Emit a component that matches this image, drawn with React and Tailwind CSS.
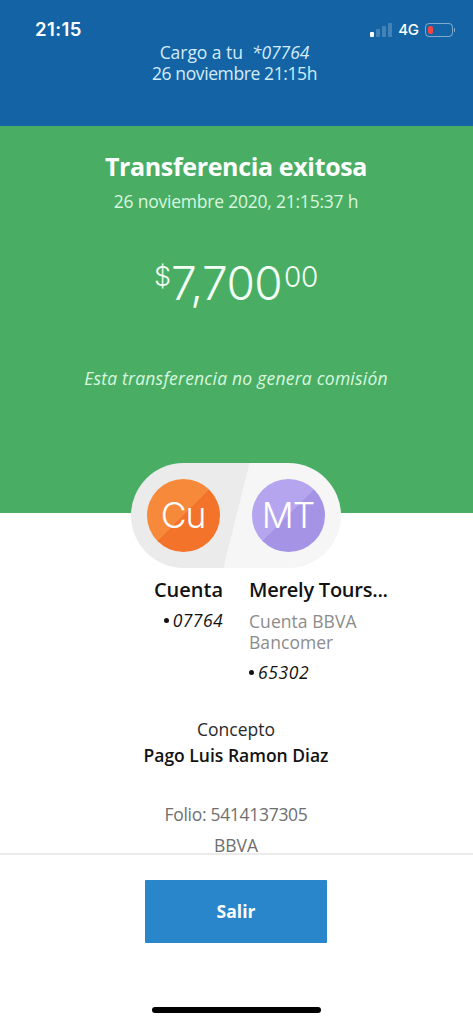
import React from 'react';

const STATUS_BARS = ['h-[5px] bg-white', 'h-2 bg-white/20', 'h-[11px] bg-white/20', 'h-[14px] bg-white/20'];

const StatusBar = () => (
  <div className="h-10 shrink-0 pt-[18px] pl-[35px] pr-[18px] flex items-start justify-between text-white">
    <span className="font-['Inter'] font-semibold text-[18.5px] leading-[23px] tracking-[0.4px]">21:15</span>
    <div className="flex items-center h-[23px]">
      <div className="flex items-end gap-[2px] mr-[6px]">
        {STATUS_BARS.map((bar) => (
          <span key={bar} className={`w-1 rounded-[1px] ${bar}`} />
        ))}
      </div>
      <span className="font-['Inter'] font-medium text-[15px] leading-[23px] tracking-[-0.4px] mr-[6px]">4G</span>
      <div className="w-7 h-[14px] rounded-[4px] border border-white/45 p-[2px]">
        <div className="w-[5px] h-full rounded-[2px] bg-[#f4453f]" />
      </div>
      <div className="w-[1.5px] h-1 ml-px rounded-r bg-white/50" />
    </div>
  </div>
);

const Avatar = ({ initials, base, shade }) => (
  <div className={`w-[73px] h-[73px] rounded-full flex items-center justify-center bg-linear-135 ${base} ${shade}`}>
    <span className="text-white font-['Inter'] font-light text-[35.5px] leading-none tracking-[-1px]">{initials}</span>
  </div>
);

const App = () => {
  return (
    <div className="w-full h-[1024px] overflow-hidden flex flex-col bg-white font-['Open_Sans','Noto_Sans',sans-serif]">

      {/* Header */}
      <header className="h-[126px] shrink-0 bg-[#1464a5]">
        <StatusBar />
        <div className="mt-[2px] pr-1 text-center text-[17.5px] leading-[21px] text-[#d3ecfb]">
          <p className="tracking-[-0.05px]">Cargo a tu&nbsp; <i>*07764</i></p>
          <p className="tracking-[-0.4px]">26 noviembre 21:15h</p>
        </div>
      </header>

      {/* Result */}
      <section className="h-[387px] shrink-0 pr-px bg-[#49ae64] text-center text-[#d9f7df] flex flex-col items-center">
        <h1 className="mt-[25px] font-bold text-[25px] leading-[30px] tracking-[-0.35px] text-white">Transferencia exitosa</h1>
        <p className="mt-[9px] text-[17.5px] leading-[22px] tracking-[-0.22px]">26 noviembre 2020, 21:15:37 h</p>
        <div className="mt-[42px] flex items-start font-['Inter'] font-light text-[#f4fff5]">
          <span className="text-[27px] leading-[54px] -mt-[4px]">$</span>
          <span className="text-[46px] leading-[58px] tracking-[-0.6px]">7,700</span>
          <span className="text-[28px] leading-[54px] -mt-[4px] ml-[2px] tracking-[-0.3px]">00</span>
        </div>
        <p className="mt-[55px] italic text-[17.5px] leading-[22px] tracking-[0.22px]">Esta transferencia no genera comisión</p>
      </section>

      {/* Accounts */}
      <div className="pr-[2px] -mt-[50px] shrink-0 flex justify-center">
        <div className="relative w-[210px] h-[105px] rounded-full overflow-hidden flex items-center justify-between px-4 bg-[linear-gradient(104deg,#ebebeb_0%,#ebebeb_50%,#f6f6f6_50.4%,#f6f6f6_100%)]">
          <Avatar initials="Cu" base="from-[#f7893b] from-50%" shade="to-[#f3732a] to-50%" />
          <Avatar initials="MT" base="from-[#b5a5ef] from-50%" shade="to-[#a593e6] to-50%" />
        </div>
      </div>

      <section className="mt-[11px] grid grid-cols-[223px_1fr] gap-x-[26px] h-[117px] shrink-0 text-[17.5px] leading-[21px] text-[#121212]">
        <div className="text-right">
          <h2 className="font-semibold text-[20px] leading-[22px]">Cuenta</h2>
          <p className="mt-[9px] flex items-center justify-end gap-1">
            <span className="w-[5px] h-[5px] rounded-full bg-[#121212]" />
            <i className="tracking-[0.4px]">07764</i>
          </p>
        </div>
        <div>
          <h2 className="font-semibold text-[20px] leading-[22px] tracking-[-0.25px]">Merely Tours...</h2>
          <p className="mt-[10px] w-[130px] text-[#8c8c8c] tracking-[0.06px]">Cuenta BBVA Bancomer</p>
          <p className="mt-[9px] flex items-center gap-1">
            <span className="w-[5px] h-[5px] rounded-full bg-[#121212]" />
            <i className="tracking-[0.6px]">65302</i>
          </p>
        </div>
      </section>

      {/* Details */}
      <section className="h-[156px] shrink-0 pt-[20px] pr-px text-center text-[17.5px] leading-[26px] text-[#6f6f6f]">
        <p className="text-[#2a2a2a]">Concepto</p>
        <p className="font-semibold text-[#121212]">Pago Luis Ramon Diaz</p>
        <p className="mt-[33px] tracking-[-0.3px]">Folio: 5414137305</p>
        <p className="mt-[5px]">BBVA</p>
      </section>

      {/* Footer */}
      <footer className="flex-1 mt-px border-t-2 border-[#ebebeb] flex flex-col items-center">
        <button className="mt-[25px] mr-px w-[182px] h-[63px] rounded-[1px] bg-[#2a86ca] text-white font-bold text-[17.5px]">Salir</button>
        <div className="mt-16 w-[169px] h-[6px] rounded-full bg-black" />
      </footer>
    </div>
  );
};

export default App;
